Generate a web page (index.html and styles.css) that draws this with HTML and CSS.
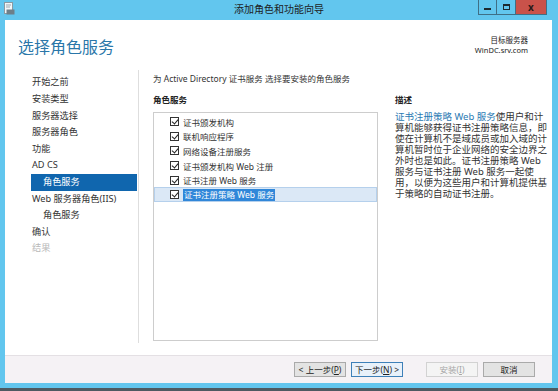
FILE: index.html
```html
<!DOCTYPE html>
<html lang="zh-CN">
<head>
    <meta charset="UTF-8">
    <title>添加角色和功能向导</title>
    <link rel="stylesheet" href="styles.css">
</head>
<body>
    <div class="window">
        <div class="titlebar">
            <svg class="app-icon" width="11" height="13" viewBox="0 0 11 13">
                <rect x="0.5" y="0.5" width="8" height="11" fill="#f2f6f8" stroke="#8a9aa3"/>
                <path d="M2 3h5M2 5h4" stroke="#9aa9b1"/>
                <rect x="2.5" y="7.5" width="8" height="5" fill="#6d7f89"/>
            </svg>
            <div class="title">添加角色和功能向导</div>
            <div class="caption-buttons">
                <span class="cap-btn cap-min"><i></i></span>
                <span class="cap-btn cap-max"><i></i></span>
                <span class="cap-btn cap-close">x</span>
            </div>
        </div>

        <div class="client">
            <div class="header">
                <h1>选择角色服务</h1>
                <div class="target">
                    <div>目标服务器</div>
                    <div>WinDC.srv.com</div>
                </div>
            </div>

            <div class="main">
                <ul class="nav">
                    <li>开始之前</li>
                    <li>安装类型</li>
                    <li>服务器选择</li>
                    <li>服务器角色</li>
                    <li>功能</li>
                    <li>AD CS</li>
                    <li class="sub active">角色服务</li>
                    <li>Web 服务器角色(IIS)</li>
                    <li class="sub">角色服务</li>
                    <li>确认</li>
                    <li class="disabled">结果</li>
                </ul>

                <div class="content">
                    <p class="intro">为 Active Directory 证书服务 选择要安装的角色服务</p>
                    <div class="columns">
                        <div class="roles">
                            <div class="label">角色服务</div>
                            <div class="listbox">
                                <div class="row"><span class="check"></span>证书颁发机构</div>
                                <div class="row"><span class="check"></span>联机响应程序</div>
                                <div class="row"><span class="check"></span>网络设备注册服务</div>
                                <div class="row"><span class="check"></span>证书颁发机构 Web 注册</div>
                                <div class="row"><span class="check"></span>证书注册 Web 服务</div>
                                <div class="row selected"><span class="check"></span><span class="hl">证书注册策略 Web 服务</span></div>
                            </div>
                        </div>
                        <div class="desc">
                            <div class="label">描述</div>
                            <p><span class="link">证书注册策略 Web 服务</span>使用户和计<br>算机能够获得证书注册策略信息，即<br>使在计算机不是域成员或加入域的计<br>算机暂时位于企业网络的安全边界之<br>外时也是如此。证书注册策略 Web<br>服务与证书注册 Web 服务一起使<br>用，以便为这些用户和计算机提供基<br>于策略的自动证书注册。</p>
                        </div>
                    </div>
                </div>
            </div>

            <div class="footer">
                <button class="btn">&lt; 上一步(<u>P</u>)</button>
                <button class="btn focus">下一步(<u>N</u>) &gt;</button>
                <button class="btn wide-gap" disabled>安装(<u>I</u>)</button>
                <button class="btn">取消</button>
            </div>
        </div>
    </div>
</body>
</html>
```

FILE: styles.css
```css
* {
    box-sizing: border-box;
}
body {
    margin: 0;
    font-family: "Noto Sans", "Noto Sans CJK SC", sans-serif;
    color: #333;
    background: #fff;
}
.window {
    width: 558px;
    height: 391px;
    background: #62c6ee; /* window frame */
    border-bottom: 3px solid #4e5a61;
    display: flex;
    flex-direction: column;
}

/* title bar */
.titlebar {
    height: 20px;
    display: grid;
    grid-template-columns: 1fr auto 1fr;
    align-items: start;
}
.app-icon {
    margin: 2px 0 0 4px;
}
.title {
    font-size: 10px;
    line-height: 19px;
    color: #1d1d1d;
}
.caption-buttons {
    justify-self: end;
    display: flex;
    margin-right: 11px;
    border: 1px solid #3f6f86;
    border-top: none;
}
.cap-btn {
    height: 14px;
    width: 18px;
    display: flex;
    align-items: center;
    justify-content: center;
}
.cap-min {
    border-right: 1px solid #3f6f86;
}
.cap-min i {
    display: block;
    width: 7px;
    height: 2px;
    margin-top: 4px;
    background: #1d2a30;
}
.cap-max i {
    display: block;
    width: 7px;
    height: 6px;
    border: 1px solid #1d2a30;
    border-top-width: 2px;
}
.cap-close {
    width: 31px;
    background: #c9524a;
    border-left: 1px solid #3f6f86;
    color: #2a1a18;
    font-size: 10px;
    font-weight: bold;
    line-height: 14px;
}

/* client area */
.client {
    height: 363px;
    margin: 0 6px 5px 5px;
    background: #fff;
    display: flex;
    flex-direction: column;
}
.header {
    height: 50px;
    display: flex;
    justify-content: space-between;
}
h1 {
    margin: 17px 0 0 13px;
    font-size: 16px;
    line-height: 20px;
    font-weight: normal;
    color: #2a77a9;
}
.target {
    padding: 15px 24px 0 0;
    text-align: right;
    font-size: 7.5px;
    line-height: 10px;
    color: #222;
}

.main {
    height: 273px;
    display: flex;
}
.nav {
    list-style: none;
    margin: 0;
    width: 134px;
    padding: 4.4px 1px 0 26px;
    border-right: 1px solid #dedede;
    font-size: 9.2px;
    color: #333;
}
.nav li {
    height: 16.6px;
    line-height: 16.6px;
    padding-left: 1px;
    white-space: nowrap;
}
.nav li.sub {
    padding-left: 12px;
}
.nav li.active {
    background: #1066ae;
    color: #fff;
}
.nav li.disabled {
    color: #b9b9b9;
}

.content {
    flex: 1;
    padding-left: 14px;
    font-size: 8.5px;
}
.intro {
    margin: 1px 0 0;
    line-height: 16px;
}
.columns {
    display: flex;
    margin-top: 5px;
}
.label {
    line-height: 16px;
    font-weight: bold;
    color: #222;
}
.roles {
    width: 225px;
}
.listbox {
    margin-top: 4px;
    height: 229px;
    border: 1px solid #cdcdcd;
    padding-top: 1.5px;
}
.row {
    height: 14.6px;
    display: flex;
    align-items: center;
    padding-left: 16px;
    white-space: nowrap;
}
.row.selected {
    background: #dbe8f6;
    box-shadow: inset 0 0 0 1px #b5d0ec;
}
.check {
    position: relative;
    width: 9px;
    height: 9px;
    margin-right: 4px;
    border: 1px solid #333;
    background: #fff;
}
.check::after {
    content: "";
    position: absolute;
    left: 2px;
    top: 0;
    width: 3px;
    height: 5px;
    border-right: 1.5px solid #222;
    border-bottom: 1.5px solid #222;
    transform: rotate(40deg);
}
.hl {
    background: #3087d9;
    color: #fff;
    padding: 0 1px;
    line-height: 12px;
}
.desc {
    margin-left: 17px;
    width: 157px;
}
.desc p {
    margin: 2.5px 0 0;
    font-size: 9.5px;
    line-height: 11px;
    white-space: nowrap;
}
.link {
    color: #2a7ab3;
}

/* bottom buttons */
.footer {
    margin-top: auto;
    height: 28px;
    border-top: 1px solid #e4e0e4;
    background: #f5f2f5;
    display: flex;
    justify-content: flex-end;
    align-items: center;
    padding-right: 17px;
}
.btn {
    width: 52px;
    height: 15px;
    margin-left: 5px;
    padding: 0;
    font-family: inherit;
    font-size: 8.5px;
    line-height: 13px;
    color: #222;
    background: #e3e3e3;
    border: 1px solid #aaaaaa;
}
.btn u {
    text-decoration: underline;
}
.btn.focus {
    background: #e8f1fa;
    border-color: #3d80b8;
}
.btn.wide-gap {
    margin-left: 23px;
}
.btn:disabled {
    background: #f4f4f4;
    border-color: #d2d2d2;
    color: #a6a6a6;
}
```
